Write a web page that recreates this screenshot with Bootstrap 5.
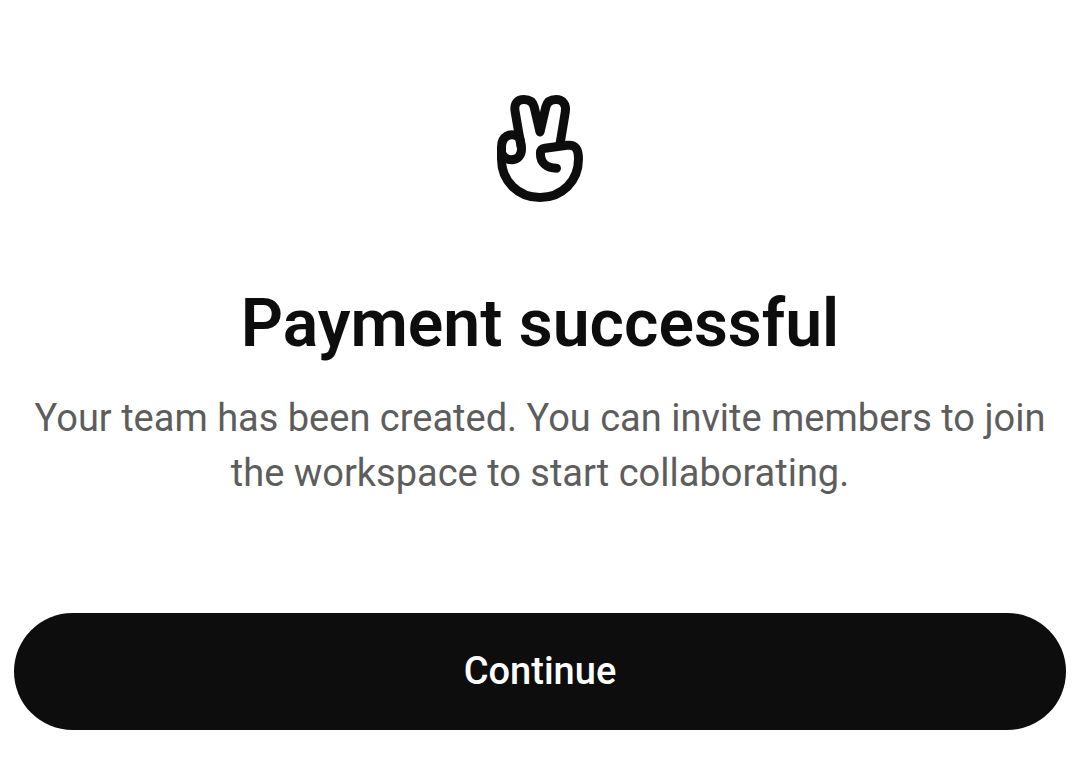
<!DOCTYPE html>
<html lang="en">
<head>
<meta charset="utf-8">
<meta name="viewport" content="width=device-width, initial-scale=1">
<title>Payment successful</title>
<link href="https://cdn.jsdelivr.net/npm/bootstrap@5.3.0/dist/css/bootstrap.min.css" rel="stylesheet">
<style>
body{font-family:Roboto,"Liberation Sans",sans-serif;color:#0d0d0d;background:#fff}
.confirmation{padding:94px 14px 50px}
.confirmation h1{font-size:66px;line-height:80px;font-weight:600;margin:80px 0 27px}
.message{font-size:38px;line-height:55px;color:#5d5d5d;margin-bottom:112px}
.btn-continue{height:117px;font-size:38px;font-weight:500;--bs-btn-color:#fff;--bs-btn-bg:#0d0d0d;--bs-btn-hover-color:#fff;--bs-btn-hover-bg:#2b2b2b;--bs-btn-border-width:0}
</style>
</head>
<body>
<main class="confirmation text-center">
<svg class="d-block mx-auto" width="88" height="110" viewBox="0 0 88 110" fill="none" stroke="#0d0d0d" stroke-width="9" stroke-linecap="round" stroke-linejoin="round" aria-hidden="true">
<path d="M25 52L19.200 18C17.500 9 22 5.600 28 5.600C33.500 5.600 37 8.500 38.200 13L44 38L49.800 13C51 8.500 54.500 5.600 60 5.600C66.500 5.600 70.500 10 69.300 18L64 50"/>
<path d="M22 42.500C14 38 5.500 42.500 5.500 53V65C5.500 87 22 103.500 44 103.500C66 103.500 82.500 87 82.500 65C82.500 54.500 79 50.200 71 51.300L49 54.300C46 54.700 44.400 56 44.400 59.500C44.400 69 51 74.200 60.500 74.200"/>
<path d="M6 60C10 68.500 25.500 68 25.500 55C25.500 51 24.500 47 23.500 43"/>
</svg>
<h1>Payment successful</h1>
<p class="message">Your team has been created. You can invite members to join the workspace to start collaborating.</p>
<button type="button" class="btn btn-continue rounded-pill w-100">Continue</button>
</main>
<script src="https://cdn.jsdelivr.net/npm/bootstrap@5.3.0/dist/js/bootstrap.bundle.min.js"></script>
</body>
</html>
